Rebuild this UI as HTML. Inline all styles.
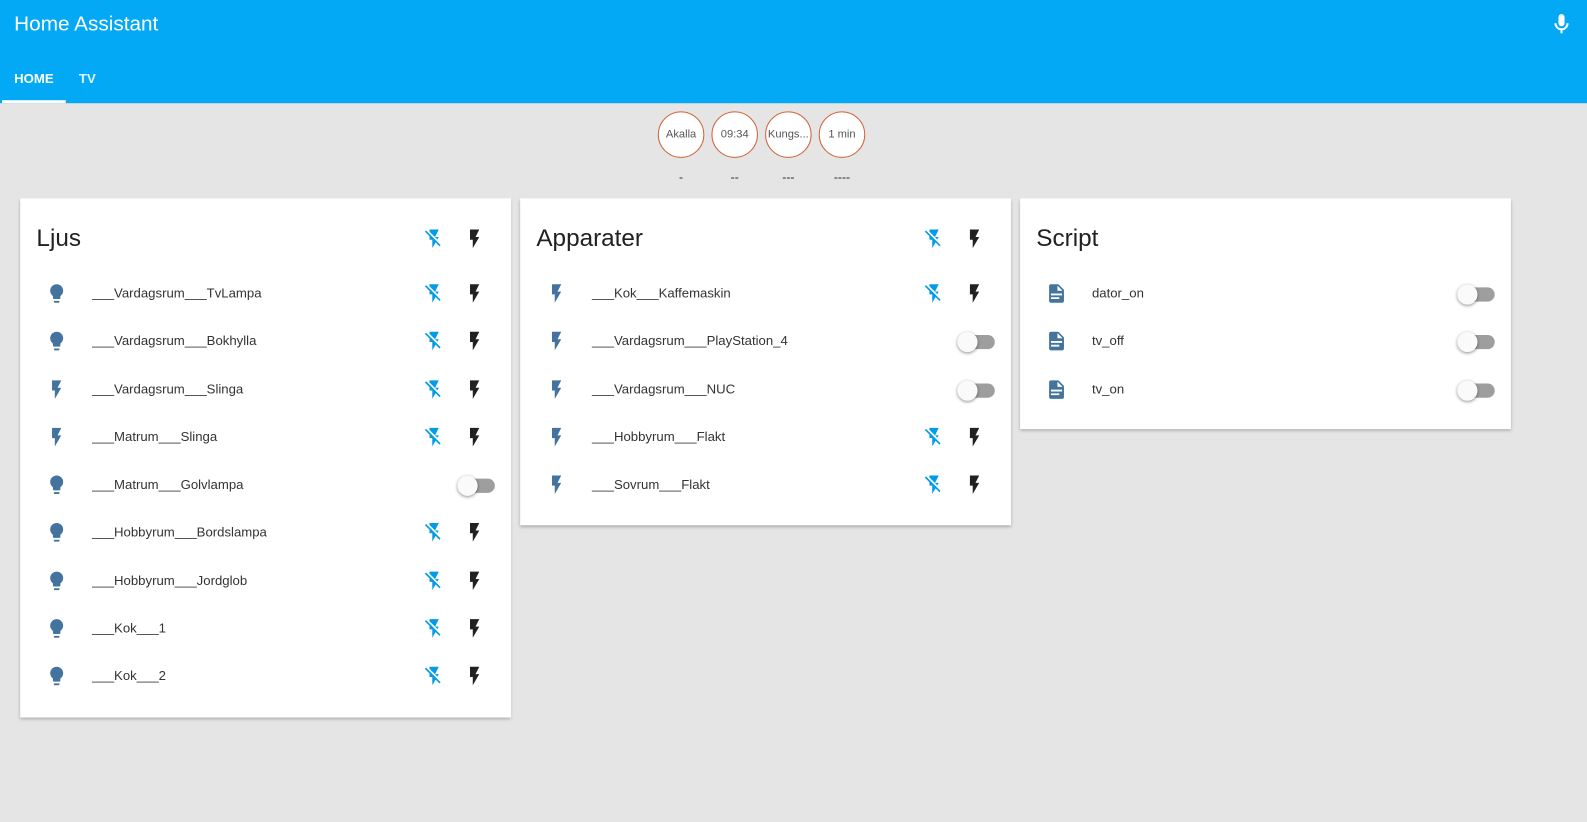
<!DOCTYPE html>
<html><head><meta charset="utf-8"><style>
*{margin:0;padding:0;box-sizing:border-box}
body{width:1587px;height:812px;background:#e5e5e5;font-family:"Liberation Sans",sans-serif;position:relative;overflow:hidden;color:#212121}
#w{position:absolute;left:0;top:0;width:1570px;height:812px;transform:scale(1.012);transform-origin:0 0}
.hdr{position:absolute;left:0;top:0;width:1570px;height:102px;background:#03a9f4;color:#fff}
.title{position:absolute;left:14px;top:12px;font-size:20.5px}
.tab{position:absolute;top:70px;font-size:13px;font-weight:bold;color:#e1f5fe}
.ul{position:absolute;left:2px;top:99px;width:63px;height:3px;background:#fff}
.mic{position:absolute;left:1531px;top:12px}
.badge{position:absolute;top:110px;width:46px;height:46px;border:1px solid #d0643a;border-radius:50%;background:#fff;font-size:11px;color:#555;display:flex;align-items:center;justify-content:center}
.dash{position:absolute;top:168px;font-size:12px;color:#222;width:46px;text-align:center}
.card{position:absolute;background:#fff;box-shadow:0 2px 3px rgba(0,0,0,.25)}
.ct{position:absolute;left:16px;top:26px;font-size:24px;color:#212121}
.rows{position:absolute;left:0;right:0;top:70px}
.row{height:47.3px;position:relative;font-size:13px;color:#333}
.row .ic{position:absolute;left:25px;top:13px}
.row .tx{position:absolute;left:71px;top:16px}
.row .fo{position:absolute;right:65px;top:13px}
.row .fl{position:absolute;right:25px;top:13px}
.tg{position:absolute;right:16px;top:18px;width:34px;height:14px;border-radius:7px;background:#9e9e9e}
.tg:before{content:"";position:absolute;left:-3px;top:-3px;width:20px;height:20px;border-radius:50%;background:#fafafa;box-shadow:0 1px 3px rgba(0,0,0,.45)}
.hd{position:absolute;right:25px;top:29px}
</style></head><body><div id="w">
<div class="hdr">
<div class="title">Home Assistant</div>
<div class="tab" style="left:14px;color:#fff">HOME</div>
<div class="tab" style="left:78px">TV</div>
<div class="ul"></div>
<svg class="mic" width="24" height="24" viewBox="0 0 24 24"><path fill="#fff" d="M12,2A3,3 0 0,1 15,5V11A3,3 0 0,1 12,14A3,3 0 0,1 9,11V5A3,3 0 0,1 12,2M19,11C19,14.530 16.390,17.440 13,17.930V21H11V17.930C7.610,17.440 5,14.530 5,11H7A5,5 0 0,0 12,16A5,5 0 0,0 17,11H19Z"/></svg>
</div>
<div class="badge" style="left:650px">Akalla</div>
<div class="badge" style="left:703px">09:34</div>
<div class="badge" style="left:756px">Kungs...</div>
<div class="badge" style="left:809px">1 min</div>
<div class="dash" style="left:650px">-</div>
<div class="dash" style="left:703px">--</div>
<div class="dash" style="left:756px">---</div>
<div class="dash" style="left:809px">----</div>

<svg width="0" height="0" style="position:absolute">
<defs>
<symbol id="bulb" viewBox="0 0 24 24"><path fill="#44739e" d="M12,2A7,7 0 0,0 5,9C5,11.38 6.19,13.47 8,14.74V17A1,1 0 0,0 9,18H15A1,1 0 0,0 16,17V14.74C17.81,13.47 19,11.38 19,9A7,7 0 0,0 12,2M9,21A1,1 0 0,0 10,22H14A1,1 0 0,0 15,21V20H9V21Z"/></symbol>
<symbol id="bolt" viewBox="0 0 24 24"><path fill="#44739e" d="M7,2V13H10V22L17,10H13L17,2H7Z"/></symbol>
<symbol id="fl" viewBox="0 0 24 24"><path fill="#212121" d="M7,2V13H10V22L17,10H13L17,2H7Z"/></symbol>
<symbol id="fo" viewBox="0 0 24 24"><path fill="#039be5" d="M17,10H13L17,2H7V4.18L15.46,12.64M3.27,3L2,4.27L7,9.27V13H10V22L13.58,15.86L17.730,20L19,18.73L3.27,3Z"/></symbol>
<symbol id="doc" viewBox="0 0 24 24"><path fill="#44739e" d="M13,9H18.5L13,3.5V9M6,2H14L20,8V20A2,2 0 0,1 18,22H6C4.89,22 4,21.1 4,20V4C4,2.89 4.89,2 6,2M15,18V16H6V18H15M18,14V12H6V14H18Z"/></symbol>
</defs></svg>

<div class="card" style="left:20px;top:196px;width:485px;height:513px">
<div class="ct">Ljus</div>
<svg class="hd" style="right:65px" width="22" height="22"><use href="#fo"/></svg><svg class="hd" width="22" height="22"><use href="#fl"/></svg>
<div class="rows">
<div class="row"><svg class="ic" width="22" height="22"><use href="#bulb"/></svg><span class="tx">___Vardagsrum___TvLampa</span><svg class="fo" width="22" height="22"><use href="#fo"/></svg><svg class="fl" width="22" height="22"><use href="#fl"/></svg></div>
<div class="row"><svg class="ic" width="22" height="22"><use href="#bulb"/></svg><span class="tx">___Vardagsrum___Bokhylla</span><svg class="fo" width="22" height="22"><use href="#fo"/></svg><svg class="fl" width="22" height="22"><use href="#fl"/></svg></div>
<div class="row"><svg class="ic" width="22" height="22"><use href="#bolt"/></svg><span class="tx">___Vardagsrum___Slinga</span><svg class="fo" width="22" height="22"><use href="#fo"/></svg><svg class="fl" width="22" height="22"><use href="#fl"/></svg></div>
<div class="row"><svg class="ic" width="22" height="22"><use href="#bolt"/></svg><span class="tx">___Matrum___Slinga</span><svg class="fo" width="22" height="22"><use href="#fo"/></svg><svg class="fl" width="22" height="22"><use href="#fl"/></svg></div>
<div class="row"><svg class="ic" width="22" height="22"><use href="#bulb"/></svg><span class="tx">___Matrum___Golvlampa</span><div class="tg"></div></div>
<div class="row"><svg class="ic" width="22" height="22"><use href="#bulb"/></svg><span class="tx">___Hobbyrum___Bordslampa</span><svg class="fo" width="22" height="22"><use href="#fo"/></svg><svg class="fl" width="22" height="22"><use href="#fl"/></svg></div>
<div class="row"><svg class="ic" width="22" height="22"><use href="#bulb"/></svg><span class="tx">___Hobbyrum___Jordglob</span><svg class="fo" width="22" height="22"><use href="#fo"/></svg><svg class="fl" width="22" height="22"><use href="#fl"/></svg></div>
<div class="row"><svg class="ic" width="22" height="22"><use href="#bulb"/></svg><span class="tx">___Kok___1</span><svg class="fo" width="22" height="22"><use href="#fo"/></svg><svg class="fl" width="22" height="22"><use href="#fl"/></svg></div>
<div class="row"><svg class="ic" width="22" height="22"><use href="#bulb"/></svg><span class="tx">___Kok___2</span><svg class="fo" width="22" height="22"><use href="#fo"/></svg><svg class="fl" width="22" height="22"><use href="#fl"/></svg></div>
</div></div>

<div class="card" style="left:514px;top:196px;width:485px;height:323px">
<div class="ct">Apparater</div>
<svg class="hd" style="right:65px" width="22" height="22"><use href="#fo"/></svg><svg class="hd" width="22" height="22"><use href="#fl"/></svg>
<div class="rows">
<div class="row"><svg class="ic" width="22" height="22"><use href="#bolt"/></svg><span class="tx">___Kok___Kaffemaskin</span><svg class="fo" width="22" height="22"><use href="#fo"/></svg><svg class="fl" width="22" height="22"><use href="#fl"/></svg></div>
<div class="row"><svg class="ic" width="22" height="22"><use href="#bolt"/></svg><span class="tx">___Vardagsrum___PlayStation_4</span><div class="tg"></div></div>
<div class="row"><svg class="ic" width="22" height="22"><use href="#bolt"/></svg><span class="tx">___Vardagsrum___NUC</span><div class="tg"></div></div>
<div class="row"><svg class="ic" width="22" height="22"><use href="#bolt"/></svg><span class="tx">___Hobbyrum___Flakt</span><svg class="fo" width="22" height="22"><use href="#fo"/></svg><svg class="fl" width="22" height="22"><use href="#fl"/></svg></div>
<div class="row"><svg class="ic" width="22" height="22"><use href="#bolt"/></svg><span class="tx">___Sovrum___Flakt</span><svg class="fo" width="22" height="22"><use href="#fo"/></svg><svg class="fl" width="22" height="22"><use href="#fl"/></svg></div>
</div></div>

<div class="card" style="left:1008px;top:196px;width:485px;height:228px">
<div class="ct">Script</div>
<div class="rows">
<div class="row"><svg class="ic" width="22" height="22"><use href="#doc"/></svg><span class="tx">dator_on</span><div class="tg"></div></div>
<div class="row"><svg class="ic" width="22" height="22"><use href="#doc"/></svg><span class="tx">tv_off</span><div class="tg"></div></div>
<div class="row"><svg class="ic" width="22" height="22"><use href="#doc"/></svg><span class="tx">tv_on</span><div class="tg"></div></div>
</div></div>
</div></body></html>
